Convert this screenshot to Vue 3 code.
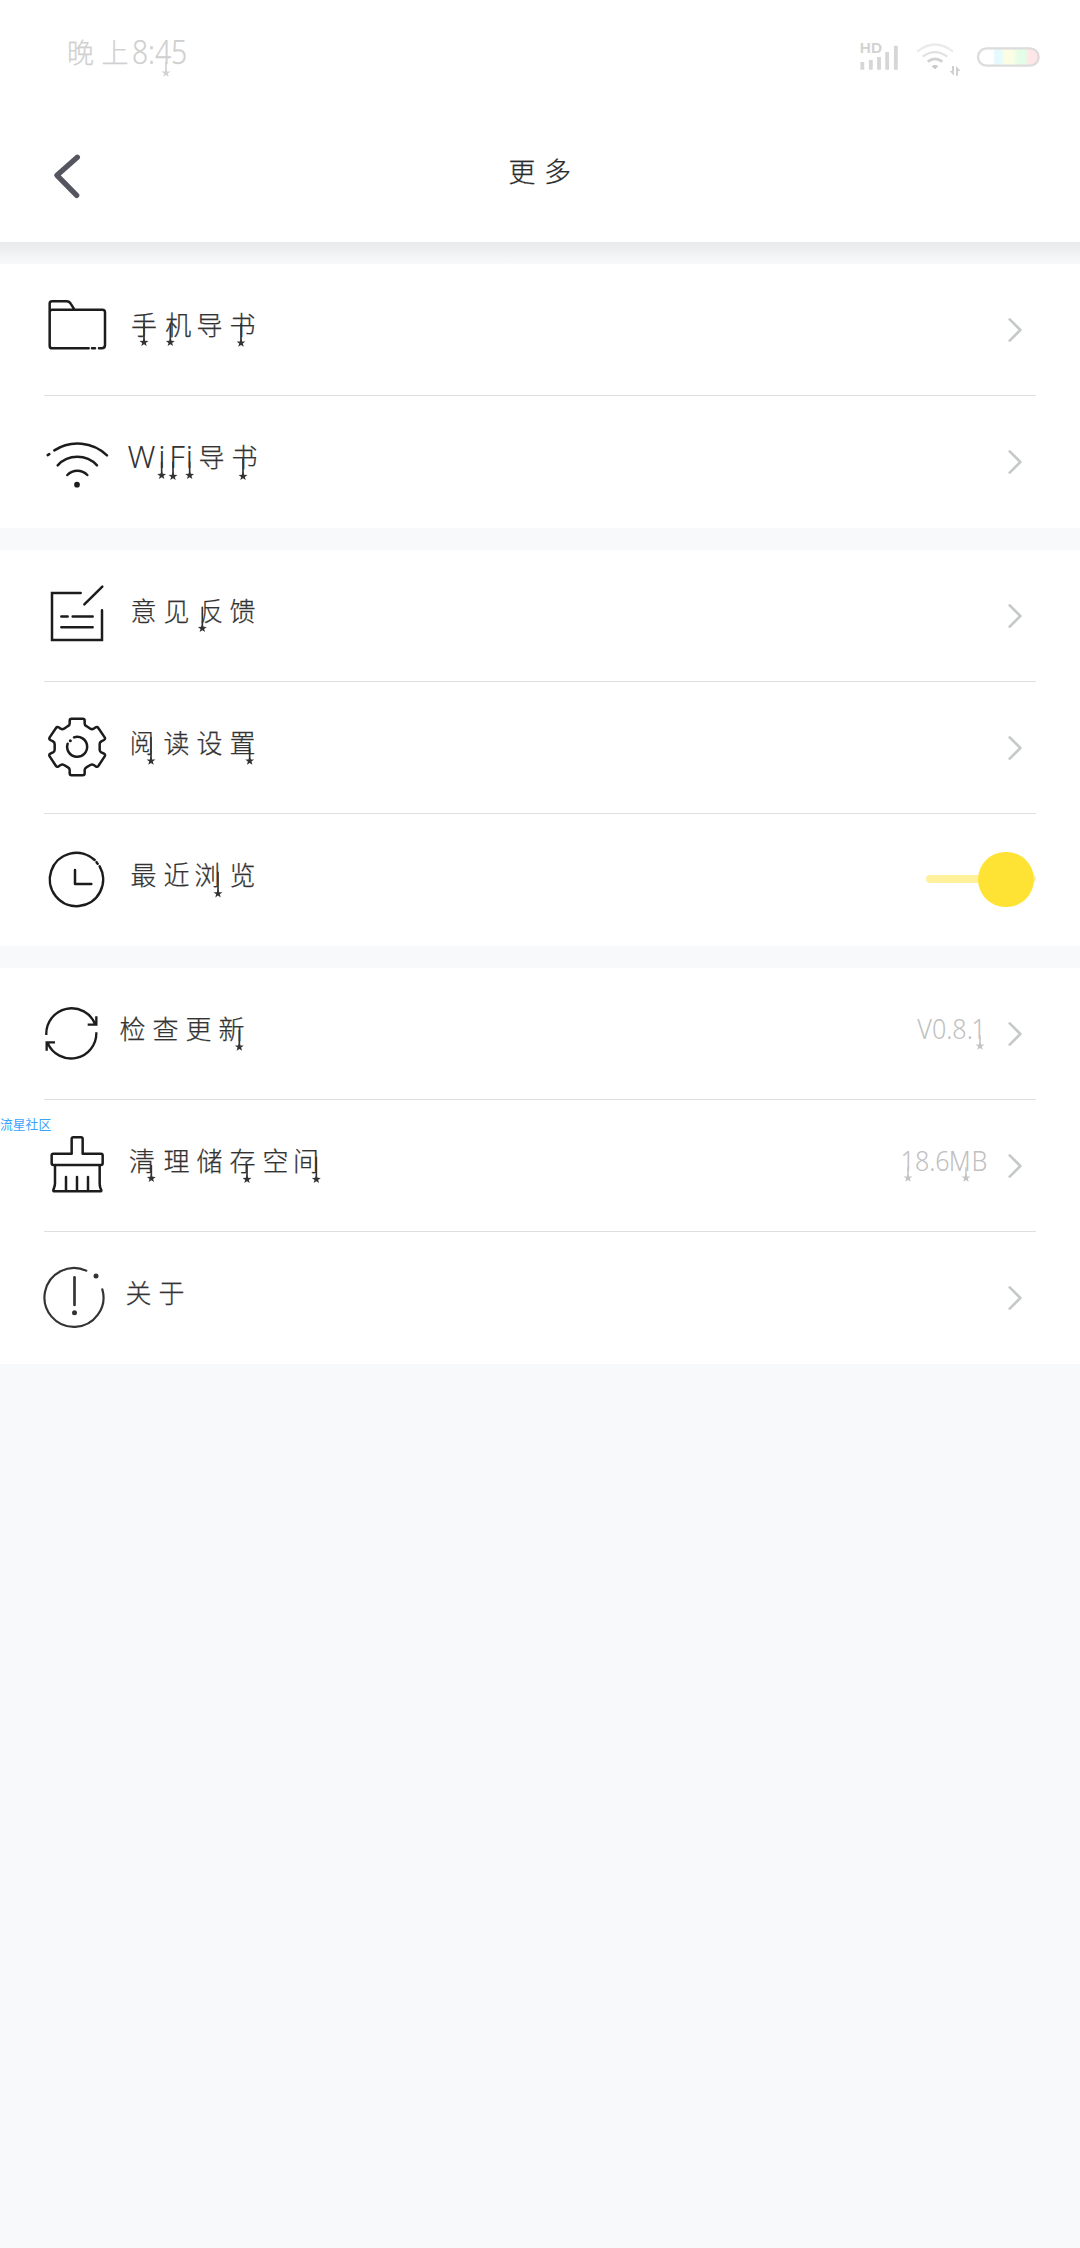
<script setup>
const STAR = 'M0-14 3.4-4.4 13.3-4.3 5.4 1.8 8.2 11.3 0 5.7-8.2 11.3-5.4 1.8-13.3-4.3-3.4-4.4Z'

// charms: [x, star y, stem top] in the icon canvas units (3 per pixel)
// nudge: character index -> [horizontal shift in px, horizontal scale]
const groups = [
  [
    { icon: 'folder', dy: 6, x: 130.5, text: '手机导书', nudge: { 0: [0.5, 1], 1: [1.8, 1] }, charms: [[432, 217, 160], [511, 217, 160], [723, 219, 160]] },
    { icon: 'wifi', dy: -126, x: 127.5, latin: 'WiFi', text: '导书', latinNudge: { 2: [1.1, 1], 3: [-1.1, 1] }, nudge: {}, charms: [[485, 616, 575], [519, 619, 575], [569, 616, 575], [729, 619, 565]] }
  ],
  [
    { icon: 'edit', dy: -10, x: 130.5, text: '意见反馈', nudge: { 2: [1.3, 0.88] }, charms: [[607, 265, 200]] },
    { icon: 'gear', dy: -142, x: 130.5, text: '阅读设置', nudge: { 0: [-2.5, 0.93] }, charms: [[453, 663, 590], [749, 663, 625]] },
    { icon: 'clock', dy: -14, x: 130.5, text: '最近浏览', nudge: { 2: [-2.2, 1] }, charms: [[654, 281, 215]], toggle: true }
  ],
  [
    { icon: 'refresh', dy: -168, x: 119.5, text: '检查更新', nudge: {}, charms: [[718, 741, 690]], value: 'V0.8.1', valueNudge: { 5: -1.3 }, valueStars: [55.2] },
    { icon: 'brush', dy: -50, x: 130.5, text: '清理储存空间', nudge: { 0: [-1.6, 1], 5: [-2.6, 1] }, charms: [[454, 385, 345], [741, 388, 345], [949, 388, 320]], value: '18.6MB', valueNudge: { 4: -1 }, valueStars: [127.2, 69.2] },
    { icon: 'about', dy: -182, x: 125.5, text: '关于', nudge: {}, charms: [] }
  ]
]

const shift = (n) => (n ? { transform: `translateX(${n[0]}px) scaleX(${n[1]})` } : null)
</script>

<template>
  <div class="page">
    <header class="top">
      <div class="status">
        <div class="clock"><span class="cjk">晚上</span><span class="digits">8:45</span>
          <svg class="clock-star" width="12" height="26" viewBox="-18 -60 36 78"><path d="M0-34V0" stroke="#d2d2d2" stroke-width="5" /><path :d="STAR" fill="#d2d2d2" /></svg>
        </div>
        <svg class="indicators" width="260" height="100" viewBox="0 0 780 300">
          <defs>
            <linearGradient id="battery" x1="477" x2="653" y1="0" y2="0" gradientUnits="userSpaceOnUse">
              <stop offset=".24" stop-color="#fff" /><stop offset=".28" stop-color="#e2f9ff" />
              <stop offset=".38" stop-color="#e8fbfa" /><stop offset=".45" stop-color="#fdfde4" />
              <stop offset=".58" stop-color="#fbfde4" /><stop offset=".66" stop-color="#e4fde8" />
              <stop offset=".78" stop-color="#e4fde8" /><stop offset=".85" stop-color="#ffe8e8" />
              <stop offset="1" stop-color="#ffe4e6" />
            </linearGradient>
          </defs>
          <text x="119" y="99" class="hd">HD</text>
          <path d="M127 126v23M152.500 120v29M177 111v38M201.500 96v53M227.500 77v72" stroke="#d6d6d6" stroke-width="11.500" fill="none" />
          <g fill="none" stroke-width="7">
            <path d="M292 95Q345 52 399 95" stroke="#ebebeb" />
            <path d="M308 110Q345 83 382 110" stroke="#e2e2e2" />
            <path d="M323 125Q345 108 367 125" stroke="#d2d2d2" stroke-width="8" />
          </g>
          <path d="M335 139Q345 131 355 139L345 148Z" fill="#c8c8c8" />
          <path d="M396 138h6v29L389 153h7ZM408 167h6V153h8L408 138Z" fill="#d0d0d0" />
          <rect x="474" y="85" width="182" height="52" rx="26" fill="url(#battery)" stroke="#dcdcdc" stroke-width="7" />
        </svg>
      </div>
      <div class="nav">
        <svg class="back" width="120" height="110" viewBox="0 360 360 330"><path d="M232 472 171 526 230 586" fill="none" stroke="#555560" stroke-width="16" stroke-linecap="round" stroke-linejoin="round" /></svg>
        <h1>更多</h1>
      </div>
    </header>

    <main>
      <section v-for="(rows, g) in groups" :key="g" class="group">
        <div v-for="row in rows" :key="row.icon" class="row">
          <svg class="art" width="340" height="132" viewBox="0 0 1020 396">
            <g :transform="`translate(0 ${row.dy * 3})`">
              <g class="icon" :class="row.icon">
                <template v-if="row.icon === 'folder'">
                  <path d="M266 235H157Q149 235 149 227V101Q149 94 156 94H200Q208 94 212 101L223 118M149 152V127Q149 119 157 119H307Q315 119 315 127V225Q315 235 305 235H297M276 235H285" />
                </template>
                <template v-else-if="row.icon === 'wifi'">
                  <path d="M163 541A128 128 0 0 1 321 556M143 555.500 148 552.500M173 586A81 81 0 0 1 291 586M202 615A42 42 0 0 1 262 615" />
                  <circle class="fill" cx="231" cy="644" r="8.500" />
                </template>
                <template v-else-if="row.icon === 'edit'">
                  <path d="M242 159H156V300H306V211M253 193 307 140M184 229.500H203M218 229.500H278M184 262H278" />
                </template>
                <template v-else-if="row.icon === 'gear'">
                  <path d="M209 542Q209 536 215 536H248Q254 536 254 542V551Q254 556 259 558L271 566Q276 569 281 566L287 562Q292 559 295 564L314 592Q317 597 312 600L304 604Q299 607 299 612V629Q299 634 304 637L312 641Q317 644 314 649L295 678Q292 682 287 679L281 675Q276 672 271 675L259 682Q254 685 254 690V700Q254 706 248 706H215Q209 706 209 700V690Q209 685 204 682L192 675Q187 672 182 675L176 679Q171 682 168 678L149 649Q146 644 151 641L159 637Q164 634 164 629V612Q164 607 159 604L151 600Q146 597 149 592L168 564Q171 559 176 562L182 566Q187 569 192 566L204 558Q209 556 209 551Z" />
                  <path d="M222 592A30 30 0 1 1 203 611" />
                  <circle class="fill" cx="211" cy="602" r="4.500" />
                </template>
                <template v-else-if="row.icon === 'clock'">
                  <path d="M284 180A80 80 0 1 0 299 199M289.500 186.500 293 191M225 210V252H274" />
                </template>
                <template v-else-if="row.icon === 'refresh'">
                  <path d="M139 705A76 76 0 0 1 286 674M289 649V674H263M289 697A76 76 0 0 1 143 729M140 752V727H165" />
                </template>
                <template v-else-if="row.icon === 'brush'">
                  <path d="M215 311V267Q215 262 220 262H243Q248 262 248 267V311H303Q308 311 308 316V340Q308 345 303 345H160Q155 345 155 340V316Q155 311 160 311H215M165 345V400Q165 407 162 414L160 420Q159 424 164 424H300Q305 424 304 420L301 414Q299 407 299 400V345M198 381V424M231 381V424M264 381V424" />
                </template>
                <template v-else>
                  <path d="M259 662A88.500 88.500 0 1 0 307 718" />
                  <path class="thick" d="M223.500 682V765" />
                  <circle class="fill" cx="288" cy="678" r="7.500" />
                  <circle class="fill" cx="223.500" cy="788" r="7.500" />
                </template>
              </g>
              <g v-for="(c, i) in row.charms" :key="i" :transform="`translate(${c[0]} ${c[1]})`">
                <path class="stem" :d="`M0 ${c[2] - c[1]}V0`" />
                <path class="star" :d="STAR" />
              </g>
            </g>
          </svg>
          <div class="label" :style="{ marginLeft: row.x + 'px' }">
            <span v-if="row.latin" class="latin"><span v-for="(ch, i) in row.latin" :key="i" class="ch" :style="shift(row.latinNudge[i])">{{ ch }}</span></span>
            <span v-for="(ch, i) in row.text" :key="i" class="ch" :style="shift(row.nudge[i])">{{ ch }}</span>
          </div>
          <div v-if="row.toggle" class="switch"><i></i></div>
          <template v-else>
            <div v-if="row.value" class="value"><span v-for="(ch, i) in row.value" :key="i" class="ch" :style="row.valueNudge[i] ? shift([row.valueNudge[i], 1]) : null">{{ ch }}</span></div>
            <svg class="chevron" width="16" height="28" viewBox="0 0 48 84"><path d="M8 10 40 42 8 74" /></svg>
          </template>
          <svg v-for="s in row.valueStars || []" :key="s" class="value-star" :style="{ right: s + 38.5 + 'px' }" width="12" height="26" viewBox="-18 -60 36 78"><path d="M0-32V0" /><path class="tip" :d="STAR" /></svg>
        </div>
      </section>
    </main>
    <span class="mark">流星社区</span>
  </div>
</template>

<style>
body { background: #f8f9fb; }
</style>

<style scoped>
.page {
  position: relative;
  min-height: 2248px;
  background: #f8f9fb;
  font-family: "Noto Sans", "Noto Sans CJK SC", sans-serif;
  font-weight: 300;
  color: #333;
}
.top { height: 242px; background: #fff; }
.status { display: flex; justify-content: space-between; height: 120px; }
.clock { position: relative; display: flex; padding: 27px 0 0 67px; height: 50px; line-height: 50px; color: #d0d0d0; white-space: nowrap; -webkit-text-stroke: .25px; }
.cjk { font-family: "Noto Sans CJK SC", sans-serif; font-size: 27px; letter-spacing: 7.500px; }
.digits { font-size: 33px; transform: scaleX(.855); transform-origin: 0 50%; margin-left: -4px; }
.clock-star { position: absolute; left: 160px; top: 52.500px; }
.indicators { margin-top: 20px; }
.hd { font: bold 46px "Liberation Sans", sans-serif; fill: #d2d2d2; letter-spacing: 1px; }
.nav { position: relative; height: 122px; }
.back { position: absolute; left: 0; top: 0; }
h1 { margin: 0; padding: 26px 0 0 8px; text-align: center; font: 300 27px/50px "Noto Sans CJK SC", sans-serif; letter-spacing: 8.500px; color: #2c2c2c; -webkit-text-stroke: .25px; }
main { display: flex; flex-direction: column; gap: 22px; padding-top: 22px; background: linear-gradient(#e9eaec, #f8f9fb 22px); }
.group { background: #fff; }
.row { position: relative; display: flex; align-items: center; height: 132px; padding-right: 58px; }
.row:not(:last-child)::after { content: ""; position: absolute; left: 44px; right: 44px; bottom: 0; height: 1px; background: #dfdfdf; }
.art { position: absolute; left: 0; top: 0; }
.icon { fill: none; stroke: #1c1c1c; stroke-width: 7.500; stroke-linecap: round; stroke-linejoin: round; }
.icon .fill { fill: #1c1c1c; stroke: none; }
.icon.edit, .icon.refresh { stroke-linejoin: miter; }
.icon.refresh { stroke-linecap: butt; stroke-width: 7; }
.icon.about { stroke: #333; stroke-width: 6.500; }
.icon.about .fill { fill: #333; }
.icon .thick { stroke-width: 8; }
.stem { stroke: #333; stroke-width: 5; }
.star { fill: #333; }
.label { display: flex; flex: 1; margin-top: -12px; font: 300 26px/40px "Noto Sans CJK SC", sans-serif; letter-spacing: 7px; white-space: nowrap; -webkit-text-stroke: .25px; }
.ch { display: inline-block; }
.latin { display: flex; font-family: "Noto Sans", sans-serif; font-size: 31px; letter-spacing: 2.800px; width: 71px; -webkit-text-stroke: 0; }
.value { display: flex; margin: -10px 20px 0 0; font-size: 27px; line-height: 40px; color: #c0c0c0; transform: scaleX(.93); transform-origin: 100% 50%; }
.value-star { position: absolute; top: 58px; }
.value-star path { stroke: #c4c4c4; stroke-width: 4.500; }
.value-star .tip { fill: #c4c4c4; stroke: none; }
.chevron { margin-right: -1px; }
.chevron path { fill: none; stroke: #c5c9c8; stroke-width: 8; stroke-linecap: round; stroke-linejoin: round; }
.switch { position: relative; width: 110px; height: 8px; margin: -2px -14px 0 0; border-radius: 4px; background: #fff09c; }
.switch i { position: absolute; right: 2.500px; top: -23.500px; width: 55.500px; height: 55.500px; border-radius: 50%; background: #ffe334; }
.mark { position: absolute; left: 0; top: 1115px; font: 400 12.800px/18px "Noto Sans CJK SC", sans-serif; color: #38a4fb; }
</style>
